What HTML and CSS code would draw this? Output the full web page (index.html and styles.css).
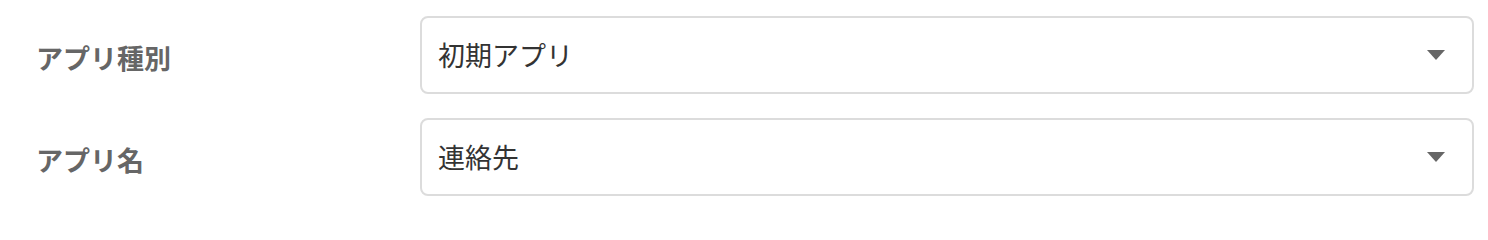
FILE: index.html
```html
<!DOCTYPE html>
<html lang="ja">
<head>
<meta charset="utf-8">
<link rel="stylesheet" href="styles.css">
</head>
<body>
<div class="form">
  <div class="row">
    <div class="label">アプリ種別</div>
    <div class="select">
      <span class="value">初期アプリ</span>
      <span class="caret"></span>
    </div>
  </div>
  <div class="row">
    <div class="label">アプリ名</div>
    <div class="select">
      <span class="value">連絡先</span>
      <span class="caret"></span>
    </div>
  </div>
</div>
</body>
</html>
```
FILE: styles.css
```css
html, body {
  margin: 0;
  padding: 0;
  background: #fff;
}
body {
  font-family: "Noto Sans CJK JP", "Noto Sans", sans-serif;
}
.form {
  display: flex;
  flex-direction: column;
  gap: 24px;
  padding: 16px 14px 0 36px;
}
.row {
  display: grid;
  grid-template-columns: 384px 1fr;
  align-items: center;
}
.label {
  font-size: 27px;
  font-weight: 700;
  color: #666;
  padding-top: 5px;
}
.select {
  box-sizing: border-box;
  height: 78px;
  border: 2px solid #dcdcdc;
  border-radius: 8px;
  display: flex;
  align-items: center;
  justify-content: space-between;
  padding: 0 27px 0 16px;
}
.value {
  font-size: 27px;
  color: #333;
  padding-bottom: 2px;
}
.caret {
  width: 0;
  height: 0;
  border-left: 9px solid transparent;
  border-right: 9px solid transparent;
  border-top: 10px solid #666;
}
```
